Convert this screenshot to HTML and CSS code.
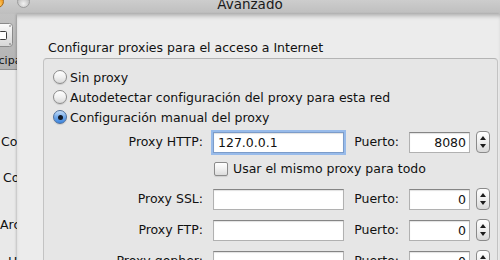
FILE: index.html
```html
<!DOCTYPE html>
<html lang="es">
<head>
	<meta charset="UTF-8"/>
	<meta name="viewport" content="width=device-width, initial-scale=1.0"/>
	<title>Avanzado</title>
	<link rel="stylesheet" href="styles.css">
</head>
<body>
	<header class="titlebar">
		<div class="lights">
			<span class="light min"></span>
			<span class="light zoom"></span>
		</div>
		<div class="title">Avanzado</div>
		<div></div>
	</header>

	<div class="main">

		<div class="behind">
			<div class="toolbar">
				<div class="tool-item">
					<svg width="24" height="24" viewBox="0 0 24 24">
						<defs>
							<linearGradient id="btn" x1="0" y1="0" x2="0" y2="1">
								<stop offset="0" stop-color="#fbfbfb"/>
								<stop offset="1" stop-color="#d6d6d6"/>
							</linearGradient>
						</defs>
						<rect x="0.5" y="0.5" width="23" height="23" rx="3" fill="url(#btn)" stroke="#8a8a8a"/>
						<rect x="10.5" y="8.5" width="7" height="8" rx="1" fill="#fff" stroke="#3c3c3c"/>
						<circle cx="21" cy="3" r="0.8" fill="#666"/>
						<circle cx="21" cy="21" r="0.8" fill="#666"/>
					</svg>
					<span class="tool-label">Principal</span>
				</div>
			</div>
			<div class="pane">
				<p class="pane-line l1">Conexión</p>
				<p class="pane-line l2">Configurar cómo</p>
				<p class="pane-line l3">Archivos sin conexión</p>
				<p class="pane-line l4">Hay</p>
			</div>
		</div>

		<div class="sheet">
			<h2>Configurar proxies para el acceso a Internet</h2>

			<div class="groupbox">
				<label class="radio"><span class="radio-mark"></span>Sin proxy</label>
				<label class="radio"><span class="radio-mark"></span>Autodetectar configuración del proxy para esta red</label>
				<label class="radio"><span class="radio-mark checked"></span>Configuración manual del proxy</label>

				<div class="proxy-row first">
					<span class="field-label">Proxy HTTP:</span>
					<div class="field focused">127.0.0.1</div>
					<span class="field-label">Puerto:</span>
					<div class="field port">8080</div>
					<div class="spinner"><span class="up"></span><span class="down"></span></div>
				</div>

				<div class="proxy-row check-row">
					<label class="check"><span class="check-mark"></span>Usar el mismo proxy para todo</label>
				</div>

				<div class="proxy-row ssl">
					<span class="field-label">Proxy SSL:</span>
					<div class="field"></div>
					<span class="field-label">Puerto:</span>
					<div class="field port">0</div>
					<div class="spinner"><span class="up"></span><span class="down"></span></div>
				</div>

				<div class="proxy-row">
					<span class="field-label">Proxy FTP:</span>
					<div class="field"></div>
					<span class="field-label">Puerto:</span>
					<div class="field port">0</div>
					<div class="spinner"><span class="up"></span><span class="down"></span></div>
				</div>

				<div class="proxy-row">
					<span class="field-label">Proxy gopher:</span>
					<div class="field"></div>
					<span class="field-label">Puerto:</span>
					<div class="field port">0</div>
					<div class="spinner"><span class="up"></span><span class="down"></span></div>
				</div>
			</div>
		</div>

	</div>
</body>
</html>
```

FILE: styles.css
```css
*{
	box-sizing: border-box;
}
body{
	margin: 0;
	width: 500px;
	height: 260px;
	overflow: hidden;
	font-family: "DejaVu Sans", sans-serif;
	font-size: 12.5px;
	color: #111;
	background: #e9e9e9;
}
.titlebar{
	height: 14px;
	display: grid;
	grid-template-columns: 1fr auto 1fr;
	background: linear-gradient(#cdcdcd, #bebebe);
	overflow: hidden;
}
.lights{
	display: flex;
	gap: 13px;
	margin-left: -9px;
	margin-top: -5px;
}
.light{
	width: 13px;
	height: 13px;
	border-radius: 50%;
}
.light.min{
	background: radial-gradient(circle at 50% 75%, #ffe08a, #f3a12a 55%, #c0700f);
	border: 1px solid #a66a1c;
}
.light.zoom{
	background: radial-gradient(circle at 50% 70%, #f2f2f2, #c4c4c4 60%, #a9a9a9);
	border: 1px solid #9c9c9c;
}
.title{
	font-size: 13.5px;
	line-height: 14px;
	margin-top: -3px;
	color: #1a1a1a;
}
.main{
	display: flex;
	height: 246px;
}
.behind{
	width: 17px;
	flex: none;
	overflow: hidden;
	display: flex;
	flex-direction: column;
}
.toolbar{
	height: 56px;
	flex: none;
	background: linear-gradient(#c2c2c2, #b2b2b2);
	border-bottom: 1px solid #8e8e8e;
}
.tool-item{
	width: 50px;
	margin-left: -24px;
	padding-top: 9px;
	display: flex;
	flex-direction: column;
	align-items: center;
}
.tool-label{
	font-size: 11px;
	line-height: 13px;
	margin-top: 7px;
	white-space: nowrap;
}
.pane{
	flex: 1;
	background: #e9e9e9;
}
.pane-line{
	margin: 0;
	line-height: 16px;
	white-space: nowrap;
}
.l1{ margin-top: 64px; padding-left: 1px; }
.l2{ margin-top: 20px; padding-left: 3px; }
.l3{ margin-top: 31px; }
.l4{ margin-top: 21px; padding-left: 8px; }

.sheet{
	flex: 1;
	background: #ececec;
	padding: 26px 0 0 26px;
	box-shadow: inset 0 4px 4px -2px rgba(0,0,0,.25), -1px 0 2px rgba(0,0,0,.18);
}
.sheet h2{
	margin: 0;
	padding-left: 5px;
	font-size: 12.5px;
	font-weight: normal;
	line-height: 16px;
}
.groupbox{
	margin: 2px 2px 0 0;
	height: 300px;
	border: 1px solid #c3c3c3;
	border-top-color: #b4b4b4;
	border-radius: 4px;
	background: #e6e6e6;
	padding: 8px 0 0 9px;
}
.radio{
	display: flex;
	align-items: center;
	height: 20px;
	gap: 3px;
	white-space: nowrap;
}
.radio-mark{
	width: 14px;
	height: 14px;
	border-radius: 50%;
	border: 1px solid #8b8b8b;
	background: linear-gradient(#ffffff, #f1f1f1 50%, #d9d9d9);
	box-shadow: 0 1px 1px rgba(0,0,0,.12);
	display: flex;
	align-items: center;
	justify-content: center;
}
.radio-mark.checked{
	border-color: #4d6f9c;
	background: linear-gradient(#c4dcf7, #72a9ea 50%, #3d85de);
}
.radio-mark.checked::after{
	content: "";
	width: 5px;
	height: 5px;
	border-radius: 50%;
	background: #131a26;
}

.proxy-row{
	display: grid;
	grid-template-columns: 150px 131px 45px 61px 14px;
	column-gap: 10px;
	align-items: center;
	height: 21px;
	margin-top: 10px;
}
.proxy-row.first{
	margin-top: 4px;
}
.proxy-row.check-row{
	height: 14px;
	margin-top: 9px;
}
.proxy-row.ssl{
	margin-top: 13px;
}
.field-label{
	text-align: right;
	white-space: nowrap;
	line-height: 16px;
}
.field{
	height: 21px;
	background: #fff;
	border: 1px solid #b1b1b1;
	border-top-color: #858585;
	box-shadow: inset 0 1px 1px rgba(0,0,0,.12);
	padding: 0 4px;
	line-height: 19px;
	white-space: nowrap;
}
.field.focused{
	box-shadow: 0 0 0 2px #98bbea, inset 0 1px 1px rgba(0,0,0,.12);
	border-color: #7c9cc9;
}
.field.port{
	text-align: right;
	padding-right: 3px;
}
.spinner{
	margin-left: -4px;
	width: 14px;
	height: 22px;
	border: 1px solid #8a8a8a;
	border-radius: 4px;
	background: linear-gradient(#ffffff, #efefef 50%, #d8d8d8);
	display: flex;
	flex-direction: column;
	justify-content: space-between;
	align-items: center;
	padding: 4px 0 4px;
}
.spinner .up{
	width: 0;
	height: 0;
	border-left: 3px solid transparent;
	border-right: 3px solid transparent;
	border-bottom: 4px solid #1c1c1c;
}
.spinner .down{
	width: 0;
	height: 0;
	border-left: 3px solid transparent;
	border-right: 3px solid transparent;
	border-top: 4px solid #1c1c1c;
}
.check{
	grid-column: 2 / -1;
	display: flex;
	align-items: center;
	gap: 5px;
	padding-left: 1px;
	white-space: nowrap;
	line-height: 16px;
}
.check-mark{
	width: 14px;
	height: 14px;
	border: 1px solid #8b8b8b;
	border-radius: 2px;
	background: linear-gradient(#ffffff, #f0f0f0 50%, #dcdcdc);
	box-shadow: 0 1px 1px rgba(0,0,0,.1);
}
```
